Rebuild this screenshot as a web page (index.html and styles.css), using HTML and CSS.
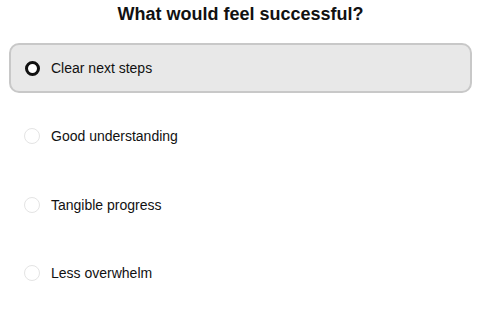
FILE: index.html
```html
<!DOCTYPE html>
<html>
<head>
<meta charset="utf-8">
<link rel="stylesheet" href="styles.css">
</head>
<body>
<div class="page">
  <h1 class="title">What would feel successful?</h1>
  <div class="options">
    <div class="option selected"><span class="radio"></span><span class="label">Clear next steps</span></div>
    <div class="option"><span class="radio"></span><span class="label">Good understanding</span></div>
    <div class="option"><span class="radio"></span><span class="label">Tangible progress</span></div>
    <div class="option"><span class="radio"></span><span class="label">Less overwhelm</span></div>
  </div>
</div>
</body>
</html>
```
FILE: styles.css
```css
html, body {
  margin: 0;
  padding: 0;
  background: #fff;
}
body {
  font-family: "Liberation Sans", Arial, sans-serif;
  color: #111;
}
.page {
  padding: 4px 15px 0 9px;
}
.title {
  margin: 0;
  font-size: 18px;
  font-weight: bold;
  text-align: center;
  line-height: 21px;
  color: #111;
}
.options {
  margin-top: 18px;
  display: flex;
  flex-direction: column;
  gap: 18.4px;
}
.option {
  height: 50px;
  box-sizing: border-box;
  display: flex;
  align-items: center;
  padding-left: 13px;
  border: 2px solid transparent;
  border-radius: 10px;
}
.option.selected {
  background: #e8e8e8;
  border-color: #c8c8c8;
}
.radio {
  width: 16px;
  height: 16px;
  box-sizing: border-box;
  border-radius: 50%;
  border: 1px solid #e4e4e4;
  background: #fff;
  flex: none;
}
.option.selected .radio {
  width: 15px;
  height: 15px;
  margin: 0 0.5px;
  border: 3.5px solid #111;
  background: #fff;
}
.label {
  margin-left: 11px;
  font-size: 14px;
  color: #111;
}
```
